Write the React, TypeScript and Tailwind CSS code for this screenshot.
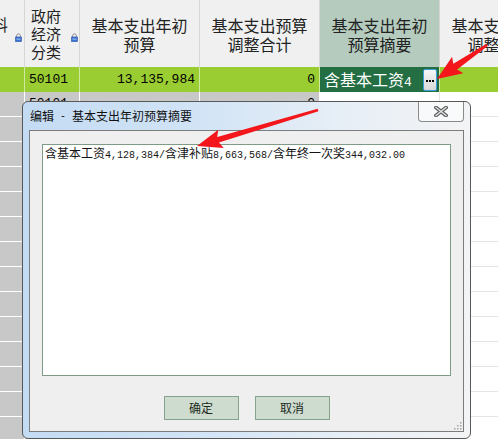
import React from 'react';

type Pt = [number, number];

// 汉字と半角英数字でフォントを分ける（宋体っぽい等幅数字にする）
function Mixed({ text, mono }: { text: string; mono: string }) {
  const parts = text.split(/([\x20-\x7e]+)/).filter(Boolean);
  return (
    <>
      {parts.map((p, i) =>
        /^[\x20-\x7e]+$/.test(p) ? (
          <span key={i} className={`font-['Liberation_Mono',monospace] whitespace-pre ${mono}`}>
            {p}
          </span>
        ) : (
          <span key={i}>{p}</span>
        )
      )}
    </>
  );
}

function arrowPoints(t: Pt, p: Pt, len: number, wing: number, w0: number, w1: number) {
  const dx = p[0] - t[0];
  const dy = p[1] - t[1];
  const l = Math.hypot(dx, dy);
  const ux = dx / l;
  const uy = dy / l;
  const nx = -uy;
  const ny = ux;
  const bx = p[0] - ux * len;
  const by = p[1] - uy * len;
  const pts: Pt[] = [
    [t[0] + nx * w0, t[1] + ny * w0],
    [bx + nx * w1, by + ny * w1],
    [bx + nx * wing - ux * 3, by + ny * wing - uy * 3],
    p,
    [bx - nx * wing - ux * 3, by - ny * wing - uy * 3],
    [bx - nx * w1, by - ny * w1],
    [t[0] - nx * w0, t[1] - ny * w0],
  ];
  return pts.map(([x, y]) => `${x.toFixed(1)},${y.toFixed(1)}`).join(' ');
}

function Lock() {
  return (
    <svg width="7" height="9" viewBox="0 0 7 9">
      <path d="M1.7 4.2V2.6a1.8 1.8 0 0 1 3.6 0v1.6" fill="none" stroke="#8c8c8c" strokeWidth="1" />
      <rect x="0.5" y="4" width="6" height="4.6" fill="#3b74d4" stroke="#2a56ab" strokeWidth="0.6" />
      <rect x="1.5" y="5.6" width="4" height="1" fill="#a9c8f2" />
    </svg>
  );
}

const headers = [
  { w: 'w-[120px]', lines: ['基本支出年初', '预算'], bg: 'bg-[#f0f0f0]' },
  { w: 'w-[120px]', lines: ['基本支出预算', '调整合计'], bg: 'bg-[#f0f0f0]' },
  { w: 'w-[120px]', lines: ['基本支出年初', '预算摘要'], bg: 'bg-[#b4cbbd]' },
  { w: 'w-[120px]', lines: ['基本支出年初', '调整合计'], bg: 'bg-[#f0f0f0]' },
];

const rows = Array.from({ length: 14 }, (_, i) => i);

export default function App() {
  return (
    <div className="relative w-[498px] h-[439px] overflow-hidden bg-white font-['Noto_Sans_CJK_SC',sans-serif] text-black">
      {/* 背景のグリッド */}
      <div className="flex h-[67px] w-max">
        <div className="relative w-[25px] shrink-0 overflow-hidden border-r border-[#d6d6d6] bg-[#f0f0f0] pt-[15px] text-[16px] leading-[19px] text-[#222]">
          <span className="-ml-[8px]">料</span>
          <div className="absolute right-[2px] top-[33px]">
            <Lock />
          </div>
        </div>
        <div className="relative w-[55px] shrink-0 border-r border-[#d6d6d6] bg-[#f0f0f0] pl-[6px] pt-[7px] text-[15px] leading-[18px] text-[#222]">
          <div>政府</div>
          <div>经济</div>
          <div>分类</div>
          <div className="absolute right-[1px] top-[33px]">
            <Lock />
          </div>
        </div>
        {headers.map((h, i) => (
          <div
            key={i}
            className={`${h.w} ${h.bg} shrink-0 border-r border-[#d6d6d6] flex flex-col items-center justify-center pt-[3px] text-[16px] leading-[19px] text-[#222] whitespace-nowrap`}
          >
            {h.lines.map((l) => (
              <div key={l}>{l}</div>
            ))}
          </div>
        ))}
      </div>

      {/* 選択行 */}
      <div className="flex h-[25px] w-max bg-[#9acd32] text-[16px]">
        <div className="w-[25px] shrink-0 border-r border-[#cfe8a0]" />
        <div className="w-[55px] shrink-0 border-r border-[#cfe8a0] flex items-center pl-[4px]">
          <Mixed text="50101" mono="text-[13px]" />
        </div>
        <div className="w-[120px] shrink-0 border-r border-[#cfe8a0] flex items-center justify-end pr-[4px]">
          <Mixed text="13,135,984" mono="text-[13px]" />
        </div>
        <div className="w-[120px] shrink-0 border-r border-[#cfe8a0] flex items-center justify-end pr-[4px]">
          <Mixed text="0" mono="text-[13px]" />
        </div>
        <div className="w-[120px] shrink-0 border-r border-[#cfe8a0] bg-[#236e43] flex items-center pl-[4px] pr-[2px] text-white">
          <div className="flex-1 overflow-hidden whitespace-nowrap">
            <Mixed text="含基本工资4" mono="text-[13px]" />
          </div>
          <div className="flex h-[22px] w-[14px] items-center justify-center gap-[1px] rounded-[2px] border border-[#3a9ddb] bg-gradient-to-b from-[#f6f6f6] to-[#d9d9d9] pt-[2px]">
            <div className="h-[2px] w-[2px] bg-black" />
            <div className="h-[2px] w-[2px] bg-black" />
            <div className="h-[2px] w-[2px] bg-black" />
          </div>
        </div>
        <div className="w-[120px] shrink-0" />
      </div>

      {rows.map((r) => (
        <div key={r} className="flex h-[25px] w-max text-[16px]">
          <div className="w-[25px] shrink-0 border-r border-b border-white bg-[#c8c8c8]" />
          <div className="w-[55px] shrink-0 border-r border-b border-white bg-[#c8c8c8] flex items-center pl-[4px]">
            {r === 0 && <Mixed text="50101" mono="text-[13px]" />}
          </div>
          <div className="w-[120px] shrink-0 border-r border-b border-white bg-[#c8c8c8]" />
          <div className="w-[120px] shrink-0 border-r border-b border-white bg-[#c8c8c8] flex items-center justify-end pr-[4px]">
            {r === 0 && <Mixed text="0" mono="text-[13px]" />}
          </div>
          <div className="w-[120px] shrink-0 border-r border-b border-[#e4e4e4]" />
          <div className="w-[120px] shrink-0 border-b border-[#e4e4e4]" />
        </div>
      ))}

      {/* 编辑ダイアログ */}
      <div className="absolute left-[22px] top-[101px] flex h-[338px] w-[449px] flex-col rounded-[6px] border border-[#585858] bg-[linear-gradient(90deg,#c3dbf3_0%,#d2e4f6_40%,#e6eef6_70%,#f3f4f5_100%)]">
        <div className="relative flex h-[28px] items-center pl-[7px] text-[12px] text-[#111]">
          <Mixed text="编辑 - 基本支出年初预算摘要" mono="text-[10px]" />
          <div className="absolute right-[6px] top-0 flex h-[20px] w-[46px] items-center justify-center rounded-b-[4px] border border-t-0 border-[#8a8a8a] bg-white/50">
            <svg width="14" height="11" viewBox="0 0 14 11">
              <path d="M2 1.5 L12 9.5 M12 1.5 L2 9.5" stroke="#5c5c5c" strokeWidth="3.6" strokeLinecap="square" />
              <path d="M2 1.5 L12 9.5 M12 1.5 L2 9.5" stroke="#e4e4e4" strokeWidth="1.4" strokeLinecap="square" />
            </svg>
          </div>
        </div>
        <div className="relative mx-[6px] flex h-[302px] flex-col border border-[#7c7c7c] bg-[#efefef] px-[12px] pb-[11px] pt-[13px]">
          <div className="h-[232px] border border-[#7f9a86] bg-white pl-[2px] text-[12px] leading-[15px] text-[#141414] whitespace-nowrap">
            <Mixed text="含基本工资4,128,384/含津补贴8,663,568/含年终一次奖344,032.00" mono="text-[10px]" />
          </div>
          <div className="mt-[20px] flex justify-center gap-[16px]">
            <button className="flex h-[24px] w-[75px] items-center justify-center border border-[#86a28b] bg-[#cedccf] text-[12px] text-[#1c2a1c]">
              确定
            </button>
            <button className="flex h-[24px] w-[75px] items-center justify-center border border-[#86a28b] bg-[#cedccf] text-[12px] text-[#1c2a1c]">
              取消
            </button>
          </div>
          <svg className="absolute bottom-[1px] right-[1px]" width="8" height="8" viewBox="0 0 8 8">
            {[
              [6, 0],
              [6, 3],
              [3, 3],
              [6, 6],
              [3, 6],
              [0, 6],
            ].map(([x, y]) => (
              <rect key={`${x}-${y}`} x={x} y={y} width="1.5" height="1.5" fill="#a4a4a4" />
            ))}
          </svg>
        </div>
      </div>

      {/* 赤い矢印 */}
      <svg className="pointer-events-none absolute inset-0" width="498" height="439">
        <polygon points={arrowPoints([487, 45], [437, 79], 22, 10, 1.3, 3.4)} fill="#f3171c" />
        <polygon points={arrowPoints([318, 110], [197, 146], 22, 9.5, 1.3, 3)} fill="#f3171c" />
      </svg>
    </div>
  );
}
